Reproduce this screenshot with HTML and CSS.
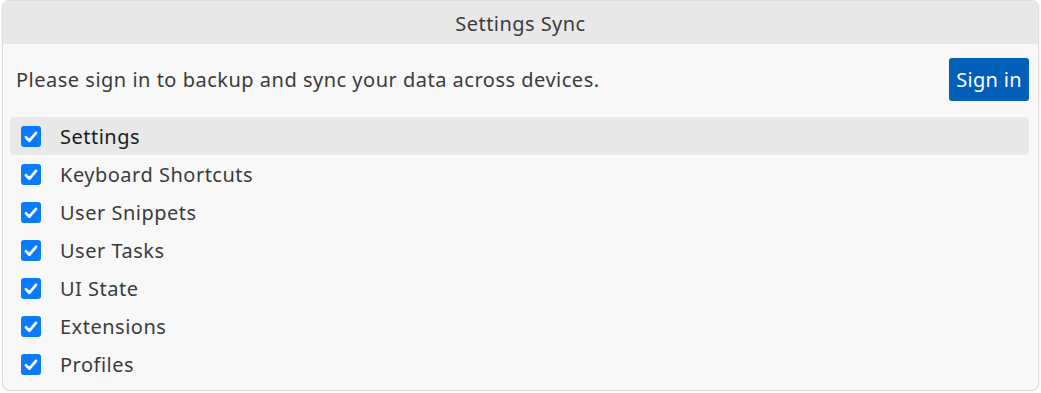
FILE: index.html
```html
<!DOCTYPE html>
<html>
<head>
<meta charset="utf-8">
<link rel="stylesheet" href="styles.css">
</head>
<body>
<div class="dialog">
  <div class="header">Settings Sync</div>
  <div class="body">
    <div class="signin-row">
      <span class="msg">Please sign in to backup and sync your data across devices.</span>
      <button class="btn">Sign in</button>
    </div>
    <ul class="list">
      <li class="item active"><span class="cb"><svg viewBox="0 0 20 20"><path d="M5 10.8l3.4 3.4L15 6.4" /></svg></span><span class="label">Settings</span></li>
      <li class="item"><span class="cb"><svg viewBox="0 0 20 20"><path d="M5 10.8l3.4 3.4L15 6.4" /></svg></span><span class="label">Keyboard Shortcuts</span></li>
      <li class="item"><span class="cb"><svg viewBox="0 0 20 20"><path d="M5 10.8l3.4 3.4L15 6.4" /></svg></span><span class="label">User Snippets</span></li>
      <li class="item"><span class="cb"><svg viewBox="0 0 20 20"><path d="M5 10.8l3.4 3.4L15 6.4" /></svg></span><span class="label">User Tasks</span></li>
      <li class="item"><span class="cb"><svg viewBox="0 0 20 20"><path d="M5 10.8l3.4 3.4L15 6.4" /></svg></span><span class="label">UI State</span></li>
      <li class="item"><span class="cb"><svg viewBox="0 0 20 20"><path d="M5 10.8l3.4 3.4L15 6.4" /></svg></span><span class="label">Extensions</span></li>
      <li class="item"><span class="cb"><svg viewBox="0 0 20 20"><path d="M5 10.8l3.4 3.4L15 6.4" /></svg></span><span class="label">Profiles</span></li>
    </ul>
  </div>
</div>
</body>
</html>
```

FILE: styles.css
```css
html, body {
  margin: 0;
  padding: 0;
  background: #ffffff;
}
body {
  font-family: "Noto Sans", "Open Sans", sans-serif;
  width: 1041px;
  height: 393px;
  overflow: hidden;
}
.dialog {
  margin: 0 2px 0 2px;
  height: 391px;
  box-sizing: border-box;
  background: #f8f8f8;
  border: 1px solid #dcdcdc;
  border-radius: 8px;
  box-shadow: 0 0 2px rgba(0,0,0,0.12);
  overflow: hidden;
}
.header {
  height: 43px;
  padding-top: 1px;
  box-sizing: border-box;
  background: #e8e8e8;
  display: flex;
  align-items: center;
  justify-content: center;
  font-size: 20px;
  letter-spacing: 0.45px;
  color: #3b3b3b;
}
.body {
  padding: 14px 9px 0 7px;
}
.signin-row {
  display: flex;
  align-items: center;
  justify-content: space-between;
  height: 43px;
  padding-left: 6px;
}
.msg {
  font-size: 20px;
  letter-spacing: 0.5px;
  color: #3b3b3b;
}
.btn {
  width: 80px;
  height: 43px;
  border: none;
  border-radius: 3px;
  background: #005fb8;
  color: #ffffff;
  font-family: inherit;
  font-size: 20px;
  letter-spacing: 0.3px;
  padding: 0;
}
.list {
  list-style: none;
  margin: 16px 0 0 0;
  padding: 0;
}
.item {
  display: flex;
  align-items: center;
  height: 38px;
  padding-left: 11px;
  border-radius: 4px;
  font-size: 20px;
  letter-spacing: 0.5px;
  color: #3b3b3b;
}
.item.active {
  background: #e8e8e8;
  color: #1a1a1a;
}
.cb {
  width: 20px;
  height: 21px;
  border-radius: 3px;
  background: #0a7aff;
  display: flex;
  flex: none;
}
.cb svg {
  width: 20px;
  height: 21px;
}
.cb path {
  fill: none;
  stroke: #ffffff;
  stroke-width: 2.8;
  stroke-linecap: round;
  stroke-linejoin: round;
}
.label {
  margin-left: 19px;
}
```
